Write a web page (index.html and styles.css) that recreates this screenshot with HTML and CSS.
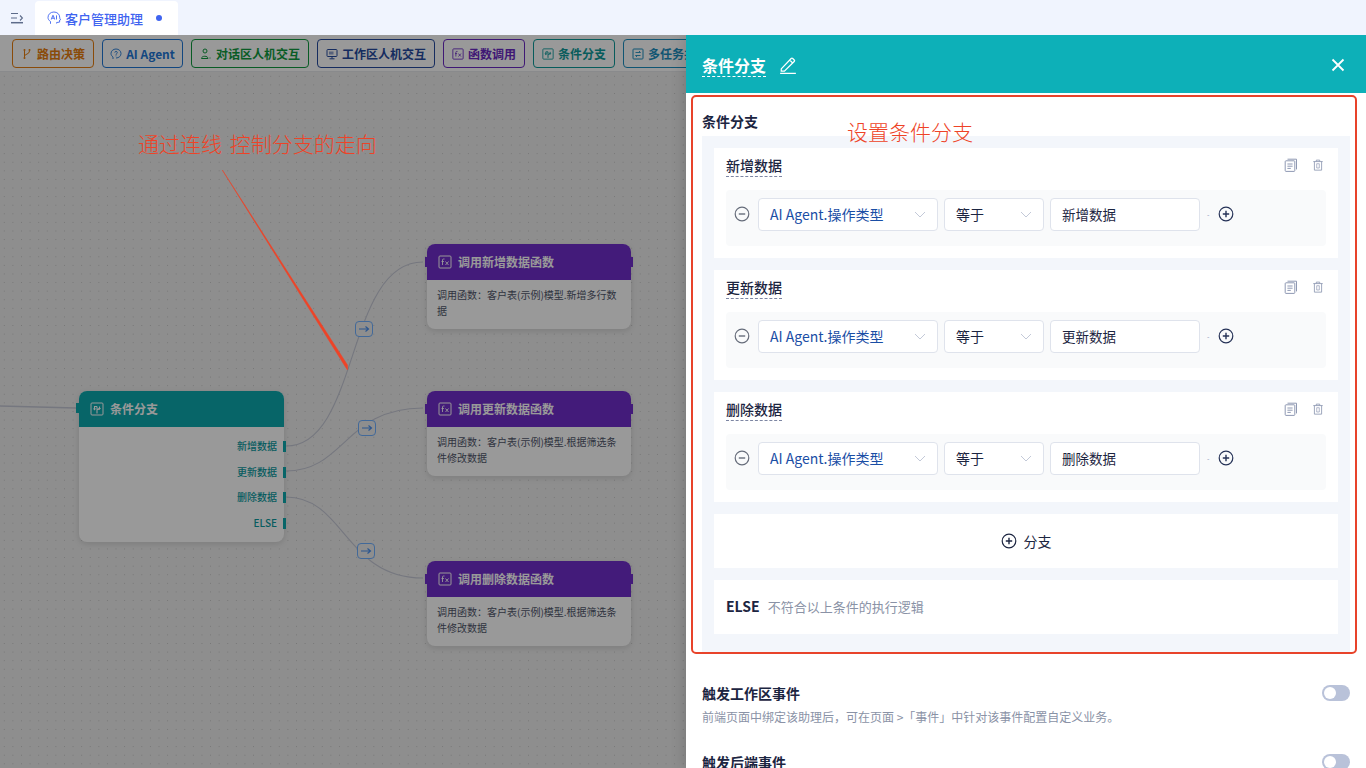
FILE: index.html
```html
<!DOCTYPE html>
<html lang="zh-CN">

<head>
	<meta charset="UTF-8">
	<title>客户管理助理</title>
	<link rel="stylesheet" href="styles.css">
</head>

<body>
	<svg class="sprite" width="0" height="0">
		<symbol id="i-fx" viewBox="0 0 14 14">
			<rect x="1" y="1" width="12" height="12" rx="1" fill="none" stroke="currentColor" />
			<path d="M6.500 4h-1c-.7 0-1 .4-1 1v5M3.500 6.500h2.400M7.500 6.500l3 3.500M10.500 6.500l-3 3.500" fill="none" stroke="currentColor" stroke-width=".9" />
		</symbol>
		<symbol id="i-branch" viewBox="0 0 14 14">
			<rect x="1" y="1" width="12" height="12" rx="1" fill="none" stroke="currentColor" />
			<path d="M7 11.500V4.500M7 4.500H4.500V7M7 7.500c1 0 2.500-.3 2.500-1.500V4.500" fill="none" stroke="currentColor" stroke-width="1.100" />
			<path d="M2.800 6.500h3.400L4.500 8.500zM8 6h3L9.500 8z" fill="currentColor" />
		</symbol>
		<symbol id="i-minus" viewBox="0 0 16 16">
			<circle cx="8" cy="8" r="6.800" fill="none" stroke="currentColor" stroke-width="1.200" />
			<path d="M4.800 8h6.400" stroke="currentColor" stroke-width="1.400" />
		</symbol>
		<symbol id="i-plus" viewBox="0 0 16 16">
			<circle cx="8" cy="8" r="6.800" fill="none" stroke="currentColor" stroke-width="1.200" />
			<path d="M4.800 8h6.400M8 4.800v6.400" stroke="currentColor" stroke-width="1.400" />
		</symbol>
		<symbol id="i-copy" viewBox="0 0 14 14">
			<path d="M3.500 1.200h9v10.200" fill="none" stroke="currentColor" />
			<rect x="1.200" y="2.800" width="9.600" height="10.600" rx=".8" fill="none" stroke="currentColor" />
			<path d="M3.400 6h5.200M3.400 8.200h5.200M3.400 10.400h3.400" stroke="currentColor" />
		</symbol>
		<symbol id="i-trash" viewBox="0 0 14 14">
			<path d="M1.500 3h11M5 3V1.300h4V3M2.800 3v10h8.400V3" fill="none" stroke="currentColor" />
			<path d="M5.500 5.500v5h3v-5z" fill="none" stroke="currentColor" stroke-width=".8" />
		</symbol>
		<symbol id="i-arrow" viewBox="0 0 12 8">
			<path d="M1 4h9M7.500 1.500L10.500 4L7.500 6.500" fill="none" stroke="currentColor" stroke-width="1.200" />
		</symbol>
		<symbol id="i-chevron" viewBox="0 0 12 7">
			<path d="M1 1l5 5l5-5" fill="none" stroke="currentColor" />
		</symbol>
	</svg>

	<div class="app">
		<div class="topbar">
			<svg class="menu-icon" viewBox="0 0 14 12" width="14" height="12">
				<path d="M1 1.500h7M1 6h6" stroke="#5d6b8a" stroke-width="1.100" fill="none" />
				<path d="M1 10.700h12" stroke="#5d6b8a" stroke-width="1.500" fill="none" />
				<path d="M10 3.500l2.400 2.500L10 8.500" stroke="#5d6b8a" stroke-width="1.100" fill="none" />
			</svg>
			<div class="tab">
				<svg class="tab-icon" viewBox="0 0 14 14" width="14" height="14">
					<path d="M3.500 12.800v-2.300C2 9.500 1 8.200 1 6.400C1 3.400 3.500 1 6.900 1c3.300 0 5.800 2.300 5.800 5.200v1l.9 1.500l-1 .4v2l-3 .4v1" fill="none" stroke="#3f64f0" stroke-width=".9" />
					<path d="M4.300 8.500L5.800 4.400h.4l1.500 4.100M4.800 7.200h2.400M9.500 4.400v4.100" fill="none" stroke="#3f64f0" stroke-width=".9" />
				</svg>
				<span class="tab-name">客户管理助理</span>
				<span class="tab-dot"></span>
			</div>
		</div>

		<div class="workspace">
			<div class="toolbar">
				<div class="chip chip-orange">
					<svg viewBox="0 0 12 12" width="12" height="12"><path d="M3.500 2.500v7M3.500 8c0-2 5-1.500 5-5" fill="none" stroke="currentColor" /><circle cx="3.500" cy="2" r="1" fill="currentColor" /><circle cx="3.500" cy="10" r="1" fill="currentColor" /><circle cx="8.500" cy="2" r="1" fill="currentColor" /></svg>
					路由决策
				</div>
				<div class="chip chip-blue">
					<svg viewBox="0 0 12 12" width="12" height="12"><path d="M3 11V9C1.800 8 1 7 1 5.500C1 3 3.200 1 6 1s5 2 5 4.500C11 8 9 10 6 10" fill="none" stroke="currentColor" stroke-width=".9" /><path d="M4.800 4.600C4.800 3 7.300 3 7.300 4.600C7.300 5.700 6 5.600 6 6.800M6 7.500v.8" fill="none" stroke="currentColor" stroke-width=".9" /></svg>
					AI Agent
				</div>
				<div class="chip chip-green">
					<svg viewBox="0 0 12 12" width="12" height="12"><circle cx="5" cy="3" r="2" fill="none" stroke="currentColor" /><path d="M1.500 10.500C1.500 7.500 8 7.500 8 10.500zM10 9.500v1" fill="none" stroke="currentColor" /></svg>
					对话区人机交互
				</div>
				<div class="chip chip-navy">
					<svg viewBox="0 0 12 12" width="12" height="12"><rect x="1" y="1.500" width="10" height="7" rx=".8" fill="none" stroke="currentColor" /><rect x="3" y="3.500" width="4.500" height="3" fill="currentColor" opacity=".5" /><path d="M6 8.500v2M3.500 10.800h5" stroke="currentColor" /></svg>
					工作区人机交互
				</div>
				<div class="chip chip-purple">
					<svg width="12" height="12"><use href="#i-fx" /></svg>
					函数调用
				</div>
				<div class="chip chip-teal">
					<svg width="12" height="12"><use href="#i-branch" /></svg>
					条件分支
				</div>
				<div class="chip chip-cyan">
					<svg viewBox="0 0 12 12" width="12" height="12"><rect x="1" y="1" width="10" height="10" rx=".8" fill="none" stroke="currentColor" /><path d="M3.500 4.500h5M7 3l1.500 1.500M8.500 7.500h-5M5 9L3.500 7.500" fill="none" stroke="currentColor" stroke-width=".9" /></svg>
					多任务并行
				</div>
			</div>

			<div class="canvas">
				<svg class="wires" viewBox="0 0 686 696" width="686" height="696">
					<path class="wire-in" d="M0 334L76 336" />
					<path d="M286 374C360 374 345 190 423 190" />
					<path d="M286 399C345 399 345 336 423 336" />
					<path d="M286 425C345 425 345 506 423 506" />
				</svg>

				<div class="node branch-node">
					<div class="node-head head-teal">
						<svg width="14" height="14"><use href="#i-branch" /></svg>
						条件分支
						<span class="port port-in"></span>
					</div>
					<div class="branch-rows">
						<div class="branch-row">新增数据<span class="port port-out"></span></div>
						<div class="branch-row">更新数据<span class="port port-out"></span></div>
						<div class="branch-row">删除数据<span class="port port-out"></span></div>
						<div class="branch-row">ELSE<span class="port port-out"></span></div>
					</div>
				</div>

				<div class="node fn-node fn-add">
					<div class="node-head head-purple">
						<svg width="14" height="14"><use href="#i-fx" /></svg>
						调用新增数据函数
						<span class="port port-fn-in"></span>
						<span class="port port-fn-out"></span>
					</div>
					<div class="fn-text">调用函数：客户表(示例)模型.新增多行数据</div>
				</div>

				<div class="node fn-node fn-update">
					<div class="node-head head-purple">
						<svg width="14" height="14"><use href="#i-fx" /></svg>
						调用更新数据函数
						<span class="port port-fn-in"></span>
						<span class="port port-fn-out"></span>
					</div>
					<div class="fn-text">调用函数：客户表(示例)模型.根据筛选条件修改数据</div>
				</div>

				<div class="node fn-node fn-delete">
					<div class="node-head head-purple">
						<svg width="14" height="14"><use href="#i-fx" /></svg>
						调用删除数据函数
						<span class="port port-fn-in"></span>
						<span class="port port-fn-out"></span>
					</div>
					<div class="fn-text">调用函数：客户表(示例)模型.根据筛选条件修改数据</div>
				</div>

				<div class="flow-tag tag-a"><svg width="12" height="8"><use href="#i-arrow" /></svg></div>
				<div class="flow-tag tag-b"><svg width="12" height="8"><use href="#i-arrow" /></svg></div>
				<div class="flow-tag tag-c"><svg width="12" height="8"><use href="#i-arrow" /></svg></div>
			</div>

			<div class="mask"></div>

			<div class="note note-line">通过连线 控制分支的走向</div>
			<svg class="note-arrow" viewBox="0 0 130 205" width="130" height="205">
				<path d="M0.300 0L125.500 195L125.500 200L122.500 195.500z" fill="#ee4327" stroke="#ee4327" stroke-width=".5" />
			</svg>

			<div class="drawer">
				<div class="drawer-head">
					<span class="drawer-title">条件分支</span>
					<svg class="edit-icon" viewBox="0 0 16 16" width="18" height="18">
						<path d="M2 11.500L10.800 2.200a1 1 0 0 1 1.400 0l1.300 1.300a1 1 0 0 1 0 1.400L4.800 13.500H2zM9.500 3.600l2.900 2.800M1 15.500h14" fill="none" stroke="#fff" stroke-width="1.100" />
					</svg>
					<svg class="close-icon" viewBox="0 0 14 14" width="14" height="14">
						<path d="M1.500 1.500l11 11M12.500 1.500l-11 11" stroke="#fff" stroke-width="1.800" />
					</svg>
				</div>

				<div class="drawer-body">
					<div class="section-label">条件分支</div>

					<div class="panel">
						<div class="card">
							<div class="card-head">
								<span class="card-title">新增数据</span>
								<svg class="card-tool" width="14" height="14"><use href="#i-copy" /></svg>
								<svg class="card-tool" width="12" height="14"><use href="#i-trash" /></svg>
							</div>
							<div class="rule">
								<svg class="rule-minus" width="16" height="16"><use href="#i-minus" /></svg>
								<div class="field field-var">AI Agent.操作类型<svg width="12" height="7"><use href="#i-chevron" /></svg></div>
								<div class="field field-op">等于<svg width="12" height="7"><use href="#i-chevron" /></svg></div>
								<div class="field field-val">新增数据</div>
								<span class="rule-dot">-</span>
								<svg class="rule-plus" width="16" height="16"><use href="#i-plus" /></svg>
							</div>
						</div>

						<div class="card">
							<div class="card-head">
								<span class="card-title">更新数据</span>
								<svg class="card-tool" width="14" height="14"><use href="#i-copy" /></svg>
								<svg class="card-tool" width="12" height="14"><use href="#i-trash" /></svg>
							</div>
							<div class="rule">
								<svg class="rule-minus" width="16" height="16"><use href="#i-minus" /></svg>
								<div class="field field-var">AI Agent.操作类型<svg width="12" height="7"><use href="#i-chevron" /></svg></div>
								<div class="field field-op">等于<svg width="12" height="7"><use href="#i-chevron" /></svg></div>
								<div class="field field-val">更新数据</div>
								<span class="rule-dot">-</span>
								<svg class="rule-plus" width="16" height="16"><use href="#i-plus" /></svg>
							</div>
						</div>

						<div class="card">
							<div class="card-head">
								<span class="card-title">删除数据</span>
								<svg class="card-tool" width="14" height="14"><use href="#i-copy" /></svg>
								<svg class="card-tool" width="12" height="14"><use href="#i-trash" /></svg>
							</div>
							<div class="rule">
								<svg class="rule-minus" width="16" height="16"><use href="#i-minus" /></svg>
								<div class="field field-var">AI Agent.操作类型<svg width="12" height="7"><use href="#i-chevron" /></svg></div>
								<div class="field field-op">等于<svg width="12" height="7"><use href="#i-chevron" /></svg></div>
								<div class="field field-val">删除数据</div>
								<span class="rule-dot">-</span>
								<svg class="rule-plus" width="16" height="16"><use href="#i-plus" /></svg>
							</div>
						</div>

						<div class="add-branch">
							<svg width="16" height="16"><use href="#i-plus" /></svg>
							分支
						</div>

						<div class="else-card">
							<span class="else-word">ELSE</span>
							<span class="else-text">不符合以上条件的执行逻辑</span>
						</div>
					</div>

					<div class="event">
						<div class="event-head">
							<span class="event-title">触发工作区事件</span>
							<span class="switch"></span>
						</div>
						<div class="event-text">前端页面中绑定该助理后，可在页面 &gt;「事件」中针对该事件配置自定义业务。</div>
					</div>

					<div class="event">
						<div class="event-head">
							<span class="event-title">触发后端事件</span>
							<span class="switch"></span>
						</div>
					</div>
				</div>

				<div class="note-box"></div>
				<div class="note note-set">设置条件分支</div>
			</div>
		</div>
	</div>
</body>

</html>
```

FILE: styles.css
```css
html,
body {
	margin: 0;
	padding: 0;
	height: 100%;
	overflow: hidden;
	font-family: "Noto Sans CJK SC", "Noto Sans", sans-serif;
	color: #1c2541;
}

.sprite {
	position: absolute;
}

svg {
	display: block;
	flex: none;
}

.app {
	display: flex;
	flex-direction: column;
	height: 100vh;
}

/* 顶部标签栏 */
.topbar {
	display: flex;
	align-items: flex-end;
	flex: none;
	height: 35px;
	background-color: #f0f4fe;
}

.menu-icon {
	margin: 0 11px 11px 10px;
}

.tab {
	display: flex;
	align-items: center;
	width: 143px;
	height: 34px;
	padding-left: 12px;
	box-sizing: border-box;
	background-color: #fff;
	border-radius: 4px 4px 0 0;
}

.tab-name {
	margin-left: 4px;
	font-size: 13px;
	font-weight: 500;
	color: #3f64f0;
}

.tab-dot {
	width: 6px;
	height: 6px;
	margin-left: 13px;
	border-radius: 50%;
	background-color: #3f64f0;
}

.workspace {
	position: relative;
	display: flex;
	flex-direction: column;
	flex: 1;
	overflow: hidden;
	background-color: #fff;
}

/* 节点工具栏 */
.toolbar {
	display: flex;
	flex: none;
	gap: 8px;
	height: 37px;
	padding: 4px 12px;
	box-sizing: border-box;
	border-bottom: 1px solid #e4e6ea;
}

.chip {
	display: flex;
	align-items: center;
	justify-content: center;
	gap: 4px;
	height: 29px;
	padding: 0 8px;
	box-sizing: border-box;
	flex: none;
	font-size: 12px;
	font-weight: 700;
	line-height: 1;
	white-space: nowrap;
	border: 1px solid currentColor;
	border-radius: 4px;
}

.chip-orange {
	color: #e67e10;
}

.chip-blue {
	width: 81px;
	padding: 0;
	color: #1f77d6;
}

.chip-green {
	width: 118px;
	padding: 0;
	color: #0f9a3e;
}

.chip-navy {
	color: #254a9e;
}

.chip-purple {
	color: #6a28c4;
}

.chip-teal {
	color: #0c9a9a;
}

.chip-cyan {
	color: #1c8ec0;
}

/* 画布 */
.canvas {
	position: relative;
	flex: 1;
	background-color: #ededed;
	background-image: radial-gradient(#c6c6c6 0.7px, transparent 0.9px);
	background-size: 8.600px 8.600px;
}

.wires {
	position: absolute;
	left: 0;
	top: 0;
}

.wires path {
	fill: none;
	stroke: #c4c7d4;
	stroke-width: 1.100;
}

.wires .wire-in {
	stroke-width: 1.500;
}

.node {
	position: absolute;
	background-color: #fff;
	border-radius: 8px;
	box-shadow: 0 2px 6px rgba(0, 0, 0, 0.12);
}

.node-head {
	position: relative;
	display: flex;
	align-items: center;
	gap: 6px;
	height: 36px;
	padding: 0 0 1px 11px;
	box-sizing: border-box;
	font-size: 12px;
	font-weight: 700;
	color: #fff;
	border-radius: 8px 8px 0 0;
}

.head-teal {
	background-color: #0ca8ad;
}

.head-purple {
	background-color: #702dcb;
}

.branch-node {
	left: 79px;
	top: 319px;
	width: 205px;
	height: 151px;
}

.branch-rows {
	padding-top: 6px;
}

.branch-row {
	position: relative;
	height: 25.500px;
	padding-right: 7px;
	font-size: 10px;
	font-weight: 500;
	line-height: 25px;
	text-align: right;
	color: #0c9a9f;
}

.port {
	position: absolute;
}

.port-in {
	left: -3px;
	top: 12px;
	width: 3px;
	height: 10px;
	background-color: #0ca8ad;
}

.port-out {
	right: -2px;
	top: 8px;
	width: 3px;
	height: 11px;
	background-color: #0ca8ad;
}

.fn-node {
	left: 427px;
	width: 204px;
}

.fn-add {
	top: 172px;
}

.fn-update {
	top: 319px;
}

.fn-delete {
	top: 489px;
}

.port-fn-in,
.port-fn-out {
	top: 13px;
	width: 3px;
	height: 10px;
	background-color: #702dcb;
}

.port-fn-in {
	left: -2px;
}

.port-fn-out {
	right: -2px;
}

.fn-text {
	padding: 7px 10px 10px;
	font-size: 10px;
	line-height: 16px;
	color: #50566a;
}

.flow-tag {
	position: absolute;
	display: flex;
	align-items: center;
	justify-content: center;
	width: 18px;
	height: 16px;
	box-sizing: border-box;
	color: #4a90ee;
	background-color: #ededed;
	border: 1px solid #6fb0ff;
	border-radius: 4px;
}

.tag-a {
	left: 354.500px;
	top: 249px;
}

.tag-b {
	left: 358px;
	top: 348px;
}

.tag-c {
	left: 357px;
	top: 471px;
}

.mask {
	position: absolute;
	left: 0;
	top: 0;
	right: 0;
	bottom: 0;
	background-color: rgba(0, 0, 0, 0.4);
}

/* 红色标注 */
.note {
	position: absolute;
	font-size: 21px;
	line-height: 28px;
	font-weight: 300;
	color: #ee4327;
	white-space: nowrap;
}

.note-line {
	left: 138px;
	top: 94px;
	word-spacing: 3px;
}

.note-set {
	left: 161px;
	top: 82px;
}

.note-arrow {
	position: absolute;
	left: 222px;
	top: 135px;
}

.note-box {
	position: absolute;
	left: 5px;
	top: 60px;
	width: 662px;
	height: 555px;
	border: 2px solid #e8432a;
	border-radius: 5px;
}

/* 右侧抽屉 */
.drawer {
	position: absolute;
	right: 0;
	top: 0;
	bottom: 0;
	width: 680px;
	display: flex;
	flex-direction: column;
	overflow: hidden;
	background-color: #fff;
	box-shadow: -4px 0 12px rgba(0, 0, 0, 0.12);
}

.drawer-head {
	display: flex;
	align-items: center;
	flex: none;
	height: 58px;
	padding: 2px 21px 0 16px;
	box-sizing: border-box;
	background-color: #0db0b8;
}

.drawer-title {
	font-size: 16px;
	font-weight: 700;
	line-height: 22px;
	color: #fff;
	border-bottom: 1px dashed #fff;
}

.edit-icon {
	margin-left: 13px;
}

.close-icon {
	margin-left: auto;
}

.drawer-body {
	padding: 18px 16px 0;
}

.section-label {
	height: 20px;
	margin-bottom: 5px;
	font-size: 14px;
	font-weight: 700;
	line-height: 20px;
}

.panel {
	display: flex;
	flex-direction: column;
	gap: 12px;
	padding: 12px 12px 20px;
	background-color: #f3f6fb;
}

.card {
	height: 110px;
	padding: 0 12px;
	box-sizing: border-box;
	background-color: #fff;
}

.card-head {
	display: flex;
	align-items: center;
	gap: 12px;
	height: 42px;
	padding-bottom: 8px;
	box-sizing: border-box;
	color: #8f99b3;
}

.card-title {
	margin-right: auto;
	font-size: 14px;
	font-weight: 500;
	line-height: 22px;
	color: #1c2541;
	border-bottom: 1px dashed #7d86a3;
}

.card-tool {
	margin-right: 2px;
}

.rule {
	display: flex;
	align-items: center;
	height: 56px;
	padding: 0 0 8px 8px;
	box-sizing: border-box;
	background-color: #f9fafb;
	border-radius: 4px;
}

.rule-minus {
	margin-right: 8px;
	color: #666c7a;
}

.field {
	display: flex;
	align-items: center;
	justify-content: space-between;
	height: 33px;
	padding: 0 11px;
	box-sizing: border-box;
	margin-right: 6px;
	font-size: 14px;
	background-color: #fff;
	border: 1px solid #dfe3ec;
	border-radius: 4px;
	color: #1c2541;
}

.field svg {
	color: #c3c9d8;
}

.field-var {
	width: 180px;
	color: #1a4ea5;
}

.field-op {
	width: 100px;
}

.field-val {
	width: 150px;
	margin-right: 0;
	font-size: 13.500px;
}

.rule-dot {
	width: 3px;
	margin-left: 7px;
	font-size: 7px;
	color: #8f99b3;
}

.rule-plus {
	margin-left: 8px;
	color: #263257;
}

.add-branch {
	display: flex;
	align-items: center;
	justify-content: center;
	gap: 7px;
	height: 54px;
	font-size: 14px;
	background-color: #fff;
}

.else-card {
	display: flex;
	align-items: center;
	gap: 8px;
	height: 54px;
	padding: 0 0 2px 12px;
	box-sizing: border-box;
	background-color: #fff;
}

.else-word {
	font-size: 14px;
	font-weight: 700;
}

.else-text {
	font-size: 13px;
	color: #8a92a6;
}

.event {
	margin-top: 29px;
}

.event + .event {
	margin-top: 26px;
}

.event-head {
	display: flex;
	align-items: center;
	justify-content: space-between;
	height: 20px;
}

.event-title {
	font-size: 14px;
	font-weight: 700;
}

.switch {
	position: relative;
	width: 28px;
	height: 16px;
	background-color: #b9c2d9;
	border-radius: 8px;
}

.switch::after {
	content: "";
	position: absolute;
	left: 2px;
	top: 2px;
	width: 12px;
	height: 12px;
	background-color: #fff;
	border-radius: 50%;
}

.event-text {
	margin-top: 5px;
	font-size: 12px;
	line-height: 18px;
	color: #8a92a6;
}
```
